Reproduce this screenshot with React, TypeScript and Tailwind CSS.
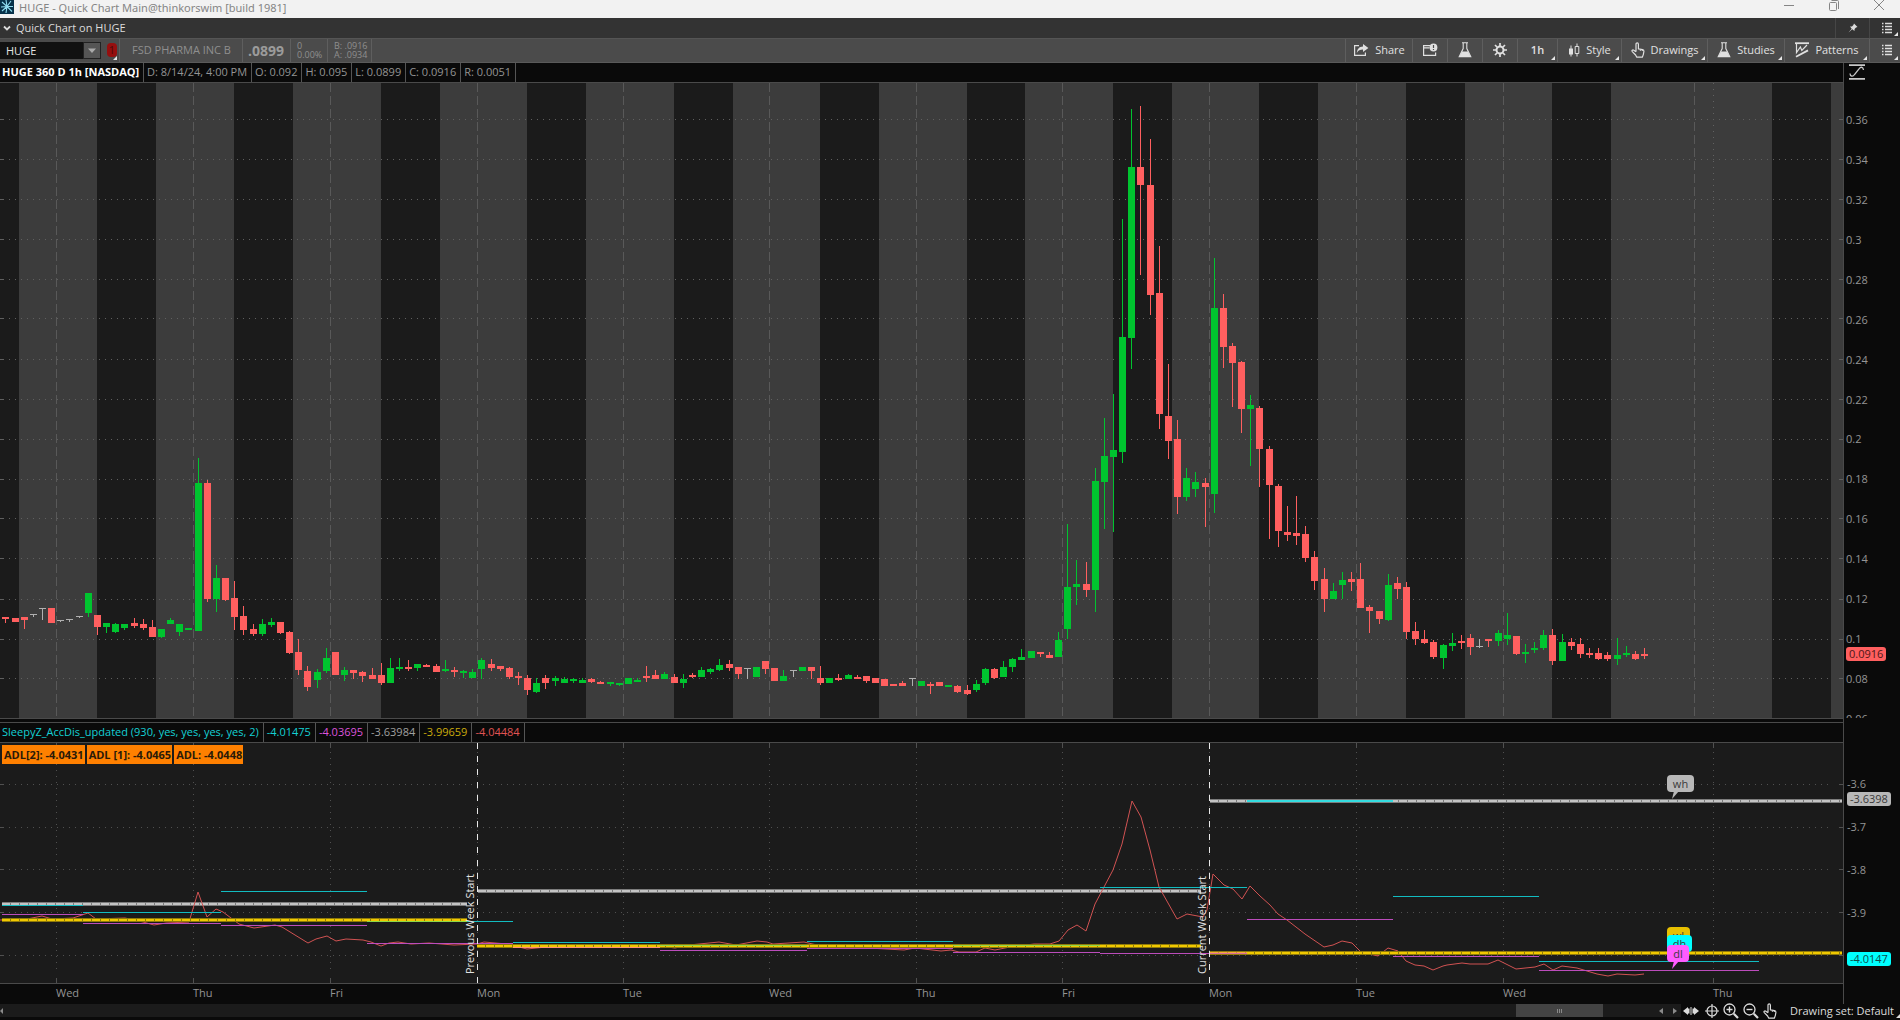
import type { ReactNode } from 'react'

type Kind = 'g' | 'r' | 'n'
// kind, high, body top, body bottom, low
type Candle = [Kind, number, number, number, number]

const PLOT_W = 1843
const PRICE_H = 635
const STUDY_H = 240

const COLORS: Record<Kind, string> = { g: '#00c42f', r: '#ff5f5f', n: '#b0b0b0' }

const CANDLES: Candle[] = [
  ['r', 534, 534, 536, 540], ['r', 535, 535, 539, 539], ['r', 534, 534, 537, 546], ['n', 531, 531, 533, 534],
  ['n', 525, 525, 527, 537], ['r', 525, 525, 540, 540], ['n', 537, 537, 539, 539], ['n', 536, 536, 538, 539],
  ['n', 533, 533, 535, 535], ['g', 510, 510, 530, 534], ['r', 532, 532, 544, 552], ['g', 540, 540, 544, 550],
  ['g', 540, 541, 549, 550], ['g', 541, 541, 545, 547], ['r', 535, 540, 543, 545], ['r', 536, 541, 545, 547],
  ['r', 537, 544, 554, 554], ['g', 546, 546, 554, 555], ['g', 535, 537, 541, 541], ['g', 541, 541, 549, 553],
  ['g', 545, 545, 547, 547], ['g', 375, 400, 548, 548], ['r', 397, 400, 516, 519], ['g', 482, 495, 516, 529],
  ['r', 495, 495, 517, 518], ['r', 498, 515, 534, 547], ['r', 523, 533, 547, 552], ['r', 541, 546, 551, 553],
  ['g', 536, 541, 551, 553], ['g', 535, 539, 542, 544], ['r', 539, 539, 550, 551], ['r', 548, 549, 570, 571],
  ['r', 556, 569, 587, 592], ['r', 583, 588, 604, 608], ['g', 586, 589, 597, 605], ['g', 565, 575, 588, 590],
  ['r', 569, 569, 592, 592], ['g', 584, 587, 592, 598], ['r', 587, 587, 590, 596], ['r', 588, 589, 593, 599],
  ['r', 585, 592, 596, 596], ['r', 580, 592, 600, 602], ['g', 575, 585, 600, 600], ['g', 575, 584, 586, 588],
  ['r', 577, 584, 586, 588], ['g', 581, 581, 585, 588], ['r', 581, 582, 584, 584], ['r', 581, 583, 589, 589],
  ['g', 577, 586, 588, 589], ['r', 584, 587, 589, 594], ['g', 587, 588, 590, 595], ['g', 586, 589, 595, 595],
  ['g', 575, 577, 586, 596], ['r', 576, 581, 585, 588], ['r', 583, 583, 586, 588], ['r', 584, 585, 594, 596],
  ['r', 589, 593, 595, 602], ['r', 592, 595, 607, 612], ['g', 595, 600, 609, 610], ['r', 592, 595, 600, 606],
  ['g', 593, 595, 598, 603], ['g', 594, 596, 600, 600], ['g', 595, 596, 598, 600], ['g', 595, 597, 600, 600],
  ['r', 595, 596, 599, 600], ['r', 598, 599, 601, 601], ['g', 599, 599, 601, 603], ['g', 600, 600, 602, 603],
  ['g', 595, 595, 601, 601], ['g', 595, 597, 599, 599], ['r', 583, 593, 595, 599], ['r', 587, 592, 596, 596],
  ['g', 589, 591, 596, 596], ['r', 591, 594, 600, 600], ['g', 591, 596, 600, 605], ['r', 590, 592, 594, 595],
  ['g', 584, 587, 594, 594], ['g', 585, 586, 589, 591], ['g', 576, 582, 587, 588], ['r', 577, 581, 585, 588],
  ['r', 584, 584, 591, 596], ['n', 585, 585, 587, 596], ['g', 584, 584, 594, 594], ['r', 578, 578, 586, 591],
  ['r', 585, 585, 598, 598], ['g', 587, 593, 598, 598], ['n', 587, 587, 589, 594], ['g', 584, 584, 588, 588],
  ['r', 584, 584, 588, 596], ['r', 583, 595, 600, 602], ['g', 595, 595, 600, 600], ['r', 591, 595, 597, 598],
  ['g', 591, 592, 596, 596], ['r', 592, 594, 596, 596], ['r', 593, 593, 598, 600], ['r', 595, 595, 600, 600],
  ['r', 596, 596, 603, 603], ['r', 601, 601, 603, 603], ['r', 598, 600, 603, 603], ['n', 595, 595, 597, 603],
  ['g', 598, 598, 603, 603], ['r', 599, 601, 603, 611], ['r', 599, 599, 603, 603], ['g', 602, 602, 604, 604],
  ['r', 602, 603, 609, 610], ['r', 602, 607, 611, 612], ['g', 597, 601, 607, 609], ['g', 585, 586, 600, 602],
  ['r', 585, 586, 595, 596], ['g', 578, 584, 594, 594], ['g', 575, 576, 584, 589], ['g', 566, 574, 577, 577],
  ['g', 568, 568, 575, 575], ['r', 569, 569, 571, 574], ['r', 569, 572, 575, 575], ['g', 549, 557, 574, 574],
  ['g', 441, 504, 546, 556], ['g', 477, 501, 504, 522], ['r', 479, 501, 507, 514], ['g', 385, 398, 507, 529],
  ['g', 335, 373, 399, 446], ['g', 311, 367, 374, 449], ['g', 136, 254, 369, 380], ['g', 26, 84, 255, 286],
  ['r', 23, 84, 102, 192], ['r', 56, 102, 212, 232], ['r', 163, 210, 331, 346], ['r', 281, 333, 358, 376],
  ['r', 337, 356, 414, 431], ['g', 385, 395, 414, 418], ['g', 389, 399, 406, 414], ['r', 395, 400, 404, 444],
  ['g', 175, 225, 411, 430], ['r', 211, 225, 264, 285], ['r', 260, 263, 280, 324], ['r', 278, 279, 326, 350],
  ['g', 312, 322, 326, 383], ['r', 323, 325, 366, 404], ['r', 363, 366, 402, 456], ['r', 401, 403, 448, 464],
  ['r', 423, 449, 452, 458], ['r', 413, 450, 453, 462], ['r', 443, 451, 475, 479], ['r', 468, 474, 498, 507],
  ['r', 485, 496, 516, 529], ['g', 500, 508, 516, 516], ['g', 489, 497, 502, 516], ['r', 489, 496, 499, 508],
  ['r', 480, 496, 525, 525], ['r', 522, 524, 528, 550], ['r', 528, 528, 536, 541], ['g', 491, 502, 537, 538],
  ['r', 494, 500, 506, 516], ['r', 499, 504, 549, 556], ['r', 539, 548, 556, 562], ['r', 547, 556, 560, 561],
  ['r', 557, 559, 574, 576], ['g', 561, 562, 575, 586], ['g', 550, 560, 563, 568], ['r', 552, 558, 560, 566],
  ['r', 551, 555, 564, 572], ['n', 556, 563, 564, 565], ['r', 556, 556, 558, 564], ['g', 547, 550, 558, 563],
  ['g', 530, 552, 556, 562], ['r', 553, 553, 571, 572], ['g', 561, 569, 571, 580], ['g', 559, 565, 567, 570],
  ['g', 547, 552, 565, 567], ['r', 546, 552, 578, 582], ['g', 551, 559, 578, 578], ['r', 555, 559, 563, 567],
  ['r', 555, 561, 571, 575], ['r', 565, 570, 572, 575], ['r', 565, 570, 576, 577], ['r', 569, 572, 576, 578],
  ['g', 555, 572, 576, 582], ['g', 563, 570, 572, 574], ['r', 568, 571, 576, 577], ['r', 565, 571, 573, 576],
]

// regular trading hours, left and right edge
const SESSIONS = [
  [0, 19], [97, 156], [234, 293], [381, 440], [527, 586], [674, 733], [820, 879],
  [967, 1025], [1113, 1172], [1259, 1318], [1406, 1465], [1552, 1611], [1772, 1831],
]

const DAYS = [
  { x: 56, label: 'Wed' }, { x: 193, label: 'Thu' }, { x: 330, label: 'Fri' }, { x: 477, label: 'Mon' },
  { x: 623, label: 'Tue' }, { x: 769, label: 'Wed' }, { x: 916, label: 'Thu' }, { x: 1062, label: 'Fri' },
  { x: 1209, label: 'Mon' }, { x: 1356, label: 'Tue' }, { x: 1503, label: 'Wed' }, { x: 1713, label: 'Thu' },
]

const PRICES = ['0.36', '0.34', '0.32', '0.3', '0.28', '0.26', '0.24', '0.22', '0.2', '0.18', '0.16', '0.14', '0.12', '0.1', '0.08', '0.06']
const PRICE_LINES = [36, 76, 116, 156, 196, 235, 276, 316, 356, 396, 435, 475, 516, 556, 595]
const STUDY_TICKS = ['-3.6', '-3.7', '-3.8', '-3.9', '-4']
const STUDY_LINES = [41, 84, 126, 169, 212]

// y, from x, to x
type Level = [number, number, number]
const WEEK_HIGH: Level[] = [[161, 2, 467], [148, 478, 1201], [58, 1210, 1842]]
const WEEK_LOW: Level[] = [[177, 2, 467], [203, 477, 1201], [210, 1210, 1842]]
const DAY_HIGH: Level[] = [
  [162, 2, 83], [169, 83, 221], [148, 221, 367], [178, 367, 513], [199, 513, 660], [202, 660, 807],
  [198, 807, 953], [202, 953, 1100], [144, 1100, 1247], [58, 1247, 1393], [153, 1393, 1539], [218, 1539, 1759],
]
const DAY_LOW: Level[] = [
  [171, 2, 83], [180, 83, 221], [182, 221, 367], [200, 367, 513], [204, 513, 660], [207, 660, 807],
  [205, 807, 953], [209, 953, 1100], [210, 1100, 1247], [176, 1247, 1393], [213, 1393, 1539], [227, 1539, 1759],
]

const ADL =
  '0,177 27,176 42,173 52,176 73,175 88,170 96,176 125,175 143,179 154,182 166,180 189,179 198,149 207,174 216,166 223,169 239,181 254,185 275,182 282,184 308,200 316,196 327,193 336,198 346,196 363,197 371,199 381,203 389,200 398,199 411,201 429,200 454,202 477,201 484,199 507,201 527,206 546,204 557,204 660,203 675,205 689,202 719,199 736,202 757,198 767,199 773,201 804,199 817,202 868,205 904,207 915,205 941,208 951,207 959,209 976,209 985,205 995,207 1010,204 1034,201 1050,201 1059,198 1068,187 1077,182 1086,188 1095,161 1104,144 1113,127 1122,101 1132,58 1141,74 1150,107 1159,144 1177,176 1187,171 1203,174 1207,167 1213,131 1224,142 1233,146 1242,156 1250,143 1260,153 1270,162 1278,171 1287,177 1305,191 1324,204 1333,202 1342,198 1352,200 1361,209 1378,213 1388,205 1398,208 1406,218 1415,222 1424,223 1433,227 1443,223 1447,222 1462,220 1470,221 1488,221 1498,217 1516,226 1535,224 1544,221 1553,227 1562,223 1577,225 1597,231 1608,233 1617,231 1635,232 1644,231'

const svgProps = { fill: 'none', stroke: 'currentColor', 'aria-hidden': true } as const

function Corner() {
  return (
    <svg {...svgProps} className="absolute right-0.5 bottom-0.5 h-1 w-1" viewBox="0 0 4 4">
      <path d="M4 0v4H0z" fill="#e8e8e8" stroke="none" />
    </svg>
  )
}

function FlaskIcon() {
  return (
    <svg {...svgProps} className="h-4 w-3.5 shrink-0" viewBox="0 0 14 16">
      <path d="M4 .8h6M5.2 1v5.5L1.2 14.8h11.6L8.8 6.5V1" strokeWidth="1.1" />
      <path d="M4 9.5h6l2.8 5.5H1.2z" fill="currentColor" stroke="none" />
    </svg>
  )
}

function HandIcon() {
  return (
    <svg {...svgProps} className="h-4 w-3.5 shrink-0" viewBox="0 0 14 16">
      <path
        d="M5 9.8V2.2C5 .5 7.4.5 7.4 2.2v4.6l4.2.9c1 .2 1.4.9 1.3 1.8l-.6 3.1-1 2.6H5.8L4.6 13 1.3 9.6c-.9-1 .4-2.2 1.5-1.4L5 9.8M9.4 7.4v1.4M11.2 7.8v1.2"
        strokeWidth="1.2"
        strokeLinejoin="round"
      />
    </svg>
  )
}

function ListIcon() {
  return (
    <svg {...svgProps} className="h-3 w-3" viewBox="0 0 12 12">
      <path d="M1 1.5h1.5M4 1.5h7M1 4.5h1.5M4 4.5h7M1 7.5h1.5M4 7.5h7M1 10.5h1.5M4 10.5h7" strokeWidth="1.3" />
    </svg>
  )
}

function ShareIcon() {
  return (
    <svg {...svgProps} className="h-3.5 w-4" viewBox="0 0 16 14">
      <path d="M6 2.6H1.6v9.8h10.8V9.6" strokeWidth="1.2" />
      <path d="M10 1l5.4 4L10 9V6.6C7 6.6 5.2 7.6 3.8 10c.2-4 2.4-6.4 6.2-6.6z" fill="currentColor" stroke="none" />
    </svg>
  )
}

function AlertIcon() {
  return (
    <svg {...svgProps} className="h-3.5 w-4" viewBox="0 0 16 14">
      <path d="M8 2.6H1.6v9.8h12V9.5M1.6 4.8h6" strokeWidth="1.2" />
      <circle cx="11.5" cy="4.5" r="3.9" fill="currentColor" stroke="none" />
      <path d="M11.5 2.1v3M11.5 5.9v1.2" stroke="#4b4b4b" strokeWidth="1.2" />
    </svg>
  )
}

function GearIcon() {
  return (
    <svg {...svgProps} className="h-3.5 w-3.5" viewBox="0 0 14 14">
      <circle cx="7" cy="7" r="3.5" strokeWidth="2" />
      <path d="M7 0v3M7 11v3M0 7h3M11 7h3M2 2l2 2M10 10l2 2M2 12l2-2M10 4l2-2" strokeWidth="1.7" />
    </svg>
  )
}

function CandleIcon() {
  return (
    <svg {...svgProps} className="h-3.5 w-3" viewBox="0 0 12 14">
      <path d="M3 2.5v11M9 .5v3M9 10.5v3" strokeWidth="1" />
      <path d="M1 5.5h4v6H1z" fill="currentColor" stroke="none" />
      <path d="M7.2 3.5h3.6v7H7.2z" strokeWidth="1" />
    </svg>
  )
}

function PatternIcon() {
  return (
    <svg {...svgProps} className="h-4 w-3.5" viewBox="0 0 14 16">
      <path d="M0 1.2h14" strokeWidth="1.8" />
      <path d="M1.5 2v8.5L5.4 5l1.4 3.4L12 3" strokeWidth="1.2" />
      <path d="M1 14.8L13 8.4" strokeWidth="1.8" />
    </svg>
  )
}

function ToolButton({ width, icon, label, menu }: { width: string; icon?: ReactNode; label: string; menu?: boolean }) {
  const iconOnly = ['Alerts', 'Lab', 'Settings', 'Menu'].includes(label)
  return (
    <button
      type="button"
      aria-label={label}
      className={`relative flex h-full items-center justify-center gap-1.5 border-l border-[#5e5e5e] pb-0.5 text-[#e0e0e0] ${width}`}
    >
      {icon}
      {!iconOnly && <span>{label}</span>}
      {menu && <Corner />}
    </button>
  )
}

function TitleBar() {
  return (
    <header className="flex h-[18px] items-center bg-[#f2f2f2] text-[#858585]">
      <svg {...svgProps} className="h-3.5 w-3.5 self-start" viewBox="0 0 14 14">
        <path d="M0 0h14v14H0z" fill="#07324a" stroke="none" />
        <path d="M7 6.5L2 2M7 6.5L6 0M7 6.5L11 1M7 6.5l6 0M7 6.5l5 5M7 6.5L6 13M7 6.5L2 11M7 6.5L1 7" stroke="#8fdcf0" strokeWidth="1.1" />
      </svg>
      <h1 className="ml-[5px] h-4 font-['Noto_Sans',sans-serif] text-[11px] leading-[14px]">HUGE - Quick Chart Main@thinkorswim [build 1981]</h1>
      <div className="ml-auto flex h-3 items-center gap-[33px] self-start pr-[15px]">
        <button type="button" aria-label="Minimize">
          <svg {...svgProps} className="h-3 w-3" viewBox="0 0 12 12"><path d="M1 5.5h10" /></svg>
        </button>
        <button type="button" aria-label="Restore">
          <svg {...svgProps} className="h-3 w-3" viewBox="0 0 12 12">
            <rect x="1.5" y="2.5" width="7" height="8" rx="1" />
            <path d="M3.5.5h6q1 0 1 1V9" />
          </svg>
        </button>
        <button type="button" aria-label="Close">
          <svg {...svgProps} className="h-3 w-3" viewBox="0 0 12 12"><path d="M1 0l10 10M11 0L1 10" /></svg>
        </button>
      </div>
    </header>
  )
}

function PanelBar() {
  return (
    <div className="flex h-[21px] items-center border-b border-[#555] bg-[#333] text-[#dcdcdc]">
      <button type="button" className="flex items-center gap-1 pl-[3px]">
        <svg {...svgProps} className="h-2 w-2" viewBox="0 0 8 8"><path d="M1 2.5l3 3 3-3" strokeWidth="1.8" /></svg>
        <span className="ml-px">Quick Chart on HUGE</span>
      </button>
      <button type="button" aria-label="Pin" className="ml-auto flex h-full w-[34px] items-center justify-center border-l border-[#464646]">
        <svg {...svgProps} className="h-2.5 w-2.5" viewBox="0 0 10 10">
          <path d="M6 .5L9.5 4 8 4.6 6.6 6l-.2 2L4.3 6.3.5 9.5l3.2-3.8L2 3.6l2-.2L5.4 2z" fill="currentColor" stroke="none" />
        </svg>
      </button>
      <button type="button" aria-label="Panel menu" className="relative flex h-full w-[31px] items-center justify-center border-l border-[#464646] pl-1">
        <ListIcon />
        <Corner />
      </button>
    </div>
  )
}

function Toolbar() {
  return (
    <div className="flex h-6 items-center border-b border-[#5a5a5a] bg-[#4b4b4b]">
      <label htmlFor="symbol" className="sr-only">Symbol</label>
      <input id="symbol" defaultValue="HUGE" className="h-[17px] w-[83px] bg-[#111] pl-1.5 leading-[17px] text-[#e4e4e4] outline-none" />
      <button type="button" aria-label="Symbol list" className="flex h-[17px] w-[18px] items-center justify-center border border-[#222] bg-[#555]">
        <svg {...svgProps} className="h-1.5 w-2" viewBox="0 0 8 6"><path d="M0 .5h8L4 5z" fill="#aaa" stroke="none" /></svg>
      </button>
      <button type="button" className="relative ml-1 flex h-full w-3.5 items-center justify-center pb-0.5 text-[#4d0808]">
        <span className="w-2.5 rounded-sm bg-[#960f0f] leading-[14px]">1</span>
        <Corner />
      </button>
      <div className="flex h-full items-center text-[#8f8f8f]">
        <span className="flex h-full w-[123px] items-center border-l border-[#5e5e5e] pb-0.5 pl-3">FSD PHARMA INC B</span>
        <span className="flex h-full w-12 items-center border-l border-[#5e5e5e] pl-[5px] text-[14px] font-bold text-[#9b9b9b]">.0899</span>
        <span className="flex h-full w-[37px] flex-col justify-center border-l border-[#5e5e5e] pb-0.5 pl-1.5 text-[9px] leading-[9px]">
          <span>0</span>
          <span>0.00%</span>
        </span>
        <span className="flex h-full w-[45px] flex-col justify-center border-x border-[#5e5e5e] pb-0.5 pl-1.5 text-[9px] leading-[9px]">
          <span>B: .0916</span>
          <span>A: .0934</span>
        </span>
      </div>
      <div className="ml-auto flex h-full">
        <ToolButton width="w-[67px]" icon={<ShareIcon />} label="Share" />
        <ToolButton width="w-[35px]" icon={<AlertIcon />} label="Alerts" />
        <ToolButton width="w-[35px]" icon={<FlaskIcon />} label="Lab" />
        <ToolButton width="w-[35px]" icon={<GearIcon />} label="Settings" />
        <ToolButton width="w-10 font-semibold" label="1h" menu />
        <ToolButton width="w-16" icon={<CandleIcon />} label="Style" menu />
        <ToolButton width="w-[86px]" icon={<HandIcon />} label="Drawings" menu />
        <ToolButton width="w-[77px]" icon={<FlaskIcon />} label="Studies" menu />
        <ToolButton width="w-[85px]" icon={<PatternIcon />} label="Patterns" menu />
        <ToolButton width="w-[31px] pl-1" icon={<ListIcon />} label="Menu" menu />
      </div>
    </div>
  )
}

function ReadoutCell({ color, children }: { color: string; children: ReactNode }) {
  return <span className={`flex h-full items-center border-r border-[#555] pr-1 pb-0.5 pl-[3px] ${color}`}>{children}</span>
}

function PriceChart() {
  return (
    <svg className="block h-[635px] w-full bg-[#3c3c3c]" viewBox={`0 0 ${PLOT_W} ${PRICE_H}`} preserveAspectRatio="none" role="img" aria-label="HUGE hourly candles">
      {SESSIONS.map(([from, to]) => (
        <rect key={from} x={from} y={0} width={to - from} height={PRICE_H} fill="#1b1b1b" />
      ))}
      {DAYS.slice(0, 11).map((d) => (
        <path key={d.x} d={`M${d.x}.5 0V${PRICE_H}`} stroke="#595959" strokeDasharray="9 4" />
      ))}
      <path d={`M1694.5 0V${PRICE_H}`} stroke="#595959" strokeDasharray="9 4" />
      <path d={`M1713.5 0V${PRICE_H}`} stroke="#626262" strokeDasharray="1 5" />
      {PRICE_LINES.map((y) => (
        <g key={y} stroke="#606060">
          <path d={`M9 ${y}.5H1830`} strokeDasharray="1 5" />
          <path d={`M0 ${y}.5h4M1839 ${y}.5h4`} />
        </g>
      ))}
      {CANDLES.map(([kind, high, top, bottom, low], i) => {
        const x = Math.floor(5.9 + i * 9.154)
        const h = kind === 'n' ? 1 : bottom - top
        return (
          <g key={i} fill={COLORS[kind]} shapeRendering="crispEdges">
            <rect x={x - 3} y={top} width={7} height={h} />
            <rect x={x} y={high} width={1} height={low - high} />
          </g>
        )
      })}
    </svg>
  )
}

function ThickLevel({ level: [y, x1, x2], dim, bright }: { level: Level; dim: string; bright: string }) {
  return (
    <g>
      <path d={`M${x1} ${y}H${x2}`} stroke={dim} strokeWidth={4} />
      <path d={`M${x1} ${y}H${x2}`} stroke={bright} strokeWidth={2} strokeDasharray="8 1" />
    </g>
  )
}

function Bubble({ x, y, w, fill, text, tail }: { x: number; y: number; w: number; fill: string; text: string; tail?: boolean }) {
  return (
    <g>
      <rect x={x} y={y} width={w} height={17} rx={4} fill={fill} />
      {tail && <path d={`M${x + 7} ${y + 16}h5l-7 8z`} fill={fill} />}
      <text x={x + w / 2} y={y + 13} textAnchor="middle" fontSize={11} fill="#3a3a3a">{text}</text>
    </g>
  )
}

function StudyChart() {
  return (
    <svg className="block h-[240px] w-full bg-[#1b1b1b]" viewBox={`0 0 ${PLOT_W} ${STUDY_H}`} preserveAspectRatio="none" role="img" aria-label="Accumulation distribution study">
      {DAYS.map((d) => (
        <g key={d.x} stroke="#505050">
          <path d={`M${d.x}.5 9V228`} strokeDasharray="1 5" />
          <path d={`M${d.x}.5 0v5M${d.x}.5 235v5`} />
        </g>
      ))}
      {STUDY_LINES.map((y) => (
        <g key={y} stroke="#505050">
          <path d={`M9 ${y}.5H1830`} strokeDasharray="1 5" />
          <path d={`M0 ${y}.5h4M1839 ${y}.5h4`} />
        </g>
      ))}
      {WEEK_HIGH.map((l) => <ThickLevel key={l[1]} level={l} dim="#7c7c7c" bright="#c4c4c4" />)}
      <polyline points={ADL} fill="none" stroke="#d05252" strokeWidth={1} />
      {WEEK_LOW.map((l) => <ThickLevel key={l[1]} level={l} dim="#8f7a0a" bright="#f0c800" />)}
      {DAY_HIGH.map(([y, a, b]) => (
        <path key={a} d={`M${a} ${y}.5H${b}`} stroke="#12bcc0" />
      ))}
      {DAY_LOW.map(([y, a, b]) => (
        <path key={a} d={`M${a} ${y}.5H${b}`} stroke="#bc4cbc" />
      ))}
      <path d="M513 204.5H660M1210 210H1247" stroke="#ff9078" />
      <path d="M367 178.5H467M660 202.5H807M953 202.5H1100" stroke="#8ed848" />
      <path d="M1247 58H1393" stroke="#34dce0" strokeWidth={2} />
      <path d={`M477.5 0V${STUDY_H}M1209.5 0V${STUDY_H}`} stroke="#e8e8e8" strokeDasharray="6 7" />
      <g fill="#e2e2e2" fontSize={11}>
        <text transform="translate(474 231) rotate(-90)">Prevous Week Start</text>
        <text transform="translate(1206 231) rotate(-90)">Current Week Start</text>
      </g>
      <Bubble x={1667} y={32} w={27} fill="#b8b8b8" text="wh" tail />
      <Bubble x={1667} y={184} w={23} fill="#e8c000" text="wl" />
      <Bubble x={1667} y={192} w={25} fill="#00ffff" text="dh" />
      <Bubble x={1667} y={202} w={22} fill="#ff5cff" text="dl" tail />
    </svg>
  )
}

function AxisColumn() {
  return (
    <aside className="w-14 bg-[#0a0a0a] text-[#949494]">
      <div className="h-5">
        <button type="button" aria-label="Auto scale" className="ml-[5px] block pt-px text-[#c8c8c8]">
          <svg {...svgProps} className="h-4 w-4" viewBox="0 0 16 16">
            <path d="M0 1.2h16M0 14.8h16" strokeWidth="1.8" />
            <path d="M1 9.5c0 3 3 3.5 4.5 1L10 5c1.5-2.5 4-2.5 4.5 1" strokeWidth="1.3" />
          </svg>
        </button>
      </div>
      <div className="relative h-[635px] overflow-hidden pt-[17px]">
        <div className="flex h-[639px] flex-col pl-0.5">
          {PRICES.map((p) => <span key={p} className="flex flex-1 items-center">{p}</span>)}
        </div>
        <span className="absolute top-[564px] left-0.5 rounded-[3px] bg-[#ff5f5f] px-[3px] leading-[14px] text-[#4c1818]">0.0916</span>
      </div>
      <div className="h-[25px]" />
      <div className="relative h-[241px] overflow-hidden pt-5">
        <div className="flex h-[214px] flex-col pl-[3px]">
          {STUDY_TICKS.map((t) => <span key={t} className="flex flex-1 items-center">{t}</span>)}
        </div>
        <span className="absolute top-[49px] left-[3px] rounded-[3px] bg-[#b8b8b8] px-[3px] leading-[14px] text-[#3a3a3a]">-3.6398</span>
        <span className="absolute top-[209px] left-[3px] rounded-[3px] bg-[#00ffff] px-[3px] leading-[14px] text-[#0c4c4c]">-4.0147</span>
      </div>
      <div className="h-5" />
    </aside>
  )
}

function DayAxis() {
  const columns = DAYS.map((d, i) => `${(DAYS[i + 1]?.x ?? PLOT_W) - d.x}fr`)
  return (
    <div className="grid h-5 items-center bg-[#0a0a0a] pb-0.5 text-[#949494]" style={{ gridTemplateColumns: `${DAYS[0].x}fr ${columns.join(' ')}` }}>
      <span />
      {DAYS.map((d) => <span key={d.x}>{d.label}</span>)}
    </div>
  )
}

function Zoom({ plus }: { plus?: boolean }) {
  return (
    <svg {...svgProps} className="h-4 w-4" viewBox="0 0 16 16">
      <circle cx="6.5" cy="6.5" r="5.5" strokeWidth="1.3" />
      <path d="M10.8 10.8L15 15" strokeWidth="2.2" />
      <path d={plus ? 'M3.5 6.5h6M6.5 3.5v6' : 'M3.5 6.5h6'} strokeWidth="1.4" />
    </svg>
  )
}

function Footer() {
  return (
    <footer className="flex h-4 bg-[#0a0a0a] text-[#dcdcdc]">
      <div className="flex h-[13px] flex-1 items-center bg-[#1b1b1b] text-[#8a8a8a]">
        <button type="button" aria-label="Scroll left">
          <svg {...svgProps} className="h-2 w-1" viewBox="0 0 4 8"><path d="M3 1v6L0 4z" fill="currentColor" stroke="none" /></svg>
        </button>
        <div role="scrollbar" aria-controls="chart" aria-valuenow={95} className="ml-auto flex h-full w-[87px] items-center justify-center gap-px bg-[#434343]">
          <i className="h-1 w-px bg-[#888]" />
          <i className="h-1 w-px bg-[#888]" />
          <i className="h-1 w-px bg-[#888]" />
        </div>
        <div className="flex w-[78px] justify-end gap-2.5 pr-1">
          <button type="button" aria-label="Step back">
            <svg {...svgProps} className="h-2 w-1" viewBox="0 0 4 8"><path d="M4 1v6L0 4z" fill="currentColor" stroke="none" /></svg>
          </button>
          <button type="button" aria-label="Step forward">
            <svg {...svgProps} className="h-2 w-1" viewBox="0 0 4 8"><path d="M0 1v6l4-3z" fill="currentColor" stroke="none" /></svg>
          </button>
        </div>
      </div>
      <div className="flex h-3.5 w-[219px] items-center">
        <div className="flex items-center gap-1 pl-0.5">
          <button type="button" aria-label="Fit width" className="mr-0.5">
            <svg {...svgProps} className="h-3 w-4" viewBox="0 0 16 12">
              <path d="M0 6l5-4v8zM16 6l-5-4v8zM5 3.5h1.5v5H5zM9.5 3.5H11v5H9.5z" fill="currentColor" stroke="none" />
              <path d="M8 2v8" />
            </svg>
          </button>
          <button type="button" aria-label="Crosshair">
            <svg {...svgProps} className="h-3.5 w-3.5" viewBox="0 0 14 14">
              <circle cx="7" cy="7" r="5" strokeWidth="1.2" />
              <path d="M7 0v14M0 7h14" strokeWidth="1.2" />
            </svg>
          </button>
          <button type="button" aria-label="Zoom in"><Zoom plus /></button>
          <button type="button" aria-label="Zoom out"><Zoom /></button>
          <button type="button" aria-label="Pan"><HandIcon /></button>
        </div>
        <button type="button" className="relative ml-auto pr-1.5 leading-[14px] whitespace-nowrap">
          Drawing set: Default
          <svg {...svgProps} className="absolute right-0 bottom-0 h-1 w-1" viewBox="0 0 4 4"><path d="M4 0v4H0z" fill="#ddd" stroke="none" /></svg>
        </button>
      </div>
    </footer>
  )
}

export default function App() {
  return (
    <div className="min-h-screen overflow-hidden bg-[#0a0a0a] font-['Open_Sans','Noto_Sans',sans-serif] text-[11px] leading-[14px]">
      <TitleBar />
      <PanelBar />
      <Toolbar />
      <div className="flex">
        <main id="chart" className="min-w-0 flex-1 border-r border-[#4a4a4a]">
          <div className="flex h-5 items-center border-b border-[#4a4a4a] text-[#949494]">
            <span className="flex h-full w-36 items-center border-r border-[#555] pb-0.5 pl-0.5 font-bold whitespace-nowrap text-white">HUGE 360 D 1h [NASDAQ]</span>
            <ReadoutCell color="">D: 8/14/24, 4:00 PM</ReadoutCell>
            <ReadoutCell color="">O: 0.092</ReadoutCell>
            <ReadoutCell color="">H: 0.095</ReadoutCell>
            <ReadoutCell color="">L: 0.0899</ReadoutCell>
            <ReadoutCell color="">C: 0.0916</ReadoutCell>
            <ReadoutCell color="">R: 0.0051</ReadoutCell>
          </div>
          <PriceChart />
          <div className="h-[5px] border-y border-[#4a4a4a]" />
          <div className="flex h-5 items-center border-b border-[#4a4a4a]">
            <span className="flex h-full items-center border-r border-[#555] pr-1 pb-0.5 pl-0.5 text-[#14d0d4]">SleepyZ_AccDis_updated (930, yes, yes, yes, yes, 2)</span>
            <ReadoutCell color="text-[#14d0d4]">-4.01475</ReadoutCell>
            <ReadoutCell color="text-[#dc54dc]">-4.03695</ReadoutCell>
            <ReadoutCell color="text-[#a0a0a0]">-3.63984</ReadoutCell>
            <ReadoutCell color="text-[#cbaa0c]">-3.99659</ReadoutCell>
            <ReadoutCell color="text-[#e05454]">-4.04484</ReadoutCell>
          </div>
          <div className="relative border-b border-[#4a4a4a]">
            <StudyChart />
            <div className="absolute top-0.5 left-0.5 flex gap-0.5 font-bold text-[#2a1a08]">
              <span className="bg-[#ff8000] pr-px pl-0.5 leading-[19px]">ADL[2]: -4.0431</span>
              <span className="bg-[#ff8000] pr-px pl-0.5 leading-[19px]">ADL [1]: -4.0465</span>
              <span className="bg-[#ff8000] pr-px pl-0.5 leading-[19px]">ADL: -4.0448</span>
            </div>
          </div>
          <DayAxis />
        </main>
        <AxisColumn />
      </div>
      <Footer />
    </div>
  )
}
